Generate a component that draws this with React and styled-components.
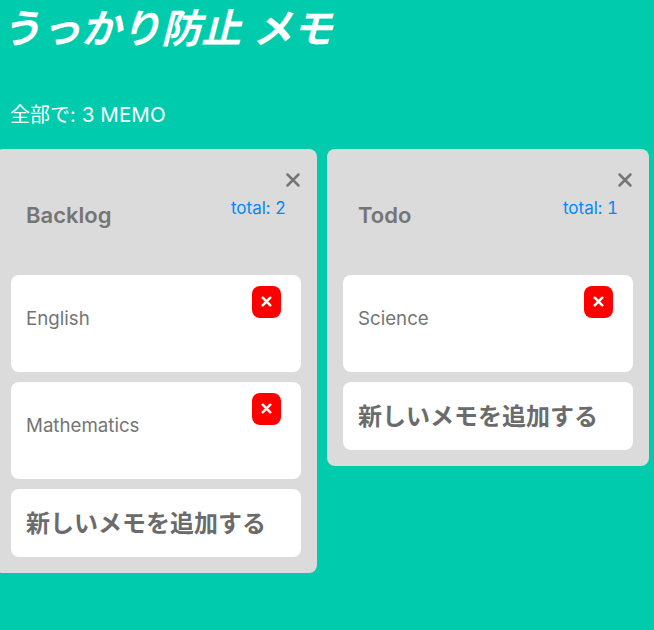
import React from "react";
import styled, { createGlobalStyle } from "styled-components";

const GlobalStyle = createGlobalStyle`
  * { box-sizing: border-box; }
  body {
    margin: 0;
    background: #00ccad;
    font-family: Inter, "Noto Sans CJK JP", sans-serif;
    overflow: hidden;
  }
`;

const Page = styled.main`
  width: 654px;
  height: 630px;
  overflow: hidden;
  background: #00ccad;
`;

const Title = styled.h1`
  margin: 0;
  height: 58px;
  padding-left: 1px;
  font-size: 40px;
  line-height: 58px;
  font-style: italic;
  font-weight: 700;
  word-spacing: 2px;
  color: #fff;
  white-space: nowrap;
`;

const Summary = styled.p`
  margin: 42px 0 0;
  height: 30px;
  padding-left: 10px;
  font-size: 20px;
  line-height: 30px;
  color: #fff;
  white-space: nowrap;
`;

const Count = styled.span`
  font-size: 20.5px;
  letter-spacing: 0.1px;
`;

const Board = styled.div`
  display: flex;
  align-items: flex-start;
  gap: 10px;
  margin: 19px 0 0 -5px;
`;

const Column = styled.section`
  flex: 0 0 322px;
  height: ${(p) => p.$height}px;
  padding: 20px 16px 16px;
  border-radius: 8px;
  background: #dbdbdb;
`;

const ColumnHeader = styled.header`
  display: grid;
  grid-template-columns: 1fr auto;
  grid-template-rows: 22px 1fr;
  height: 106px;
  padding-left: 15px;
`;

const CloseButton = styled.button`
  grid-column: 2;
  justify-self: end;
  width: 16px;
  height: 22px;
  padding: 0;
  border: 0;
  background: none;
  color: #757575;
  svg { display: block; }
`;

const ColumnTitle = styled.h2`
  grid-column: 1;
  grid-row: 2;
  margin: 7px 0 0;
  font-size: 22px;
  line-height: 34px;
  font-weight: 600;
  color: #757575;
`;

const Total = styled.span`
  grid-column: 2;
  grid-row: 2;
  padding: 5px 15px 0 0;
  font-size: 17px;
  line-height: 24px;
  font-variant-numeric: tabular-nums;
  color: #0388f8;
`;

const Cards = styled.div`
  display: flex;
  flex-direction: column;
  gap: 10px;
`;

const Card = styled.article`
  display: flex;
  justify-content: space-between;
  height: 97px;
  padding: 11px 20px 0 15px;
  border-radius: 8px;
  background: #fff;
`;

const CardText = styled.span`
  margin-top: 19px;
  font-size: 18.7px;
  line-height: 28px;
  color: #757575;
`;

const DeleteButton = styled.button`
  display: grid;
  place-items: center;
  width: 29px;
  height: 32px;
  padding: 0 0 1px;
  border: 0;
  border-radius: 8px;
  background: #f00;
  color: #fff;
`;

const AddButton = styled.button`
  height: 68px;
  padding: 0 15px 2px;
  border: 0;
  border-radius: 8px;
  background: #fff;
  font: 700 24px/36px "Noto Sans CJK JP", sans-serif;
  text-align: left;
  color: #6b6b6b;
`;

const columns = [
  { title: "Backlog", memos: ["English", "Mathematics"], height: 424 },
  { title: "Todo", memos: ["Science"], height: 317 },
];

function Cross({ size, stroke }) {
  return (
    <svg width={size} height={size} viewBox="0 0 16 16">
      <path
        d="M2.5 2.5L13.5 13.5M13.5 2.5L2.5 13.5"
        stroke="currentColor"
        strokeWidth={stroke}
        strokeLinecap="round"
      />
    </svg>
  );
}

export default function App() {
  const count = columns.reduce((n, c) => n + c.memos.length, 0);
  return (
    <Page>
      <GlobalStyle />
      <Title>うっかり防止 メモ</Title>
      <Summary>全部で:<Count> {count} MEMO</Count></Summary>
      <Board>
        {columns.map((c) => (
          <Column key={c.title} $height={c.height}>
            <ColumnHeader>
              <CloseButton aria-label="close"><Cross size={16} stroke={2.5} /></CloseButton>
              <ColumnTitle>{c.title}</ColumnTitle>
              <Total>total: {c.memos.length}</Total>
            </ColumnHeader>
            <Cards>
              {c.memos.map((m) => (
                <Card key={m}>
                  <CardText>{m}</CardText>
                  <DeleteButton aria-label="delete"><Cross size={11} stroke={3.6} /></DeleteButton>
                </Card>
              ))}
              <AddButton>新しいメモを追加する</AddButton>
            </Cards>
          </Column>
        ))}
      </Board>
    </Page>
  );
}
